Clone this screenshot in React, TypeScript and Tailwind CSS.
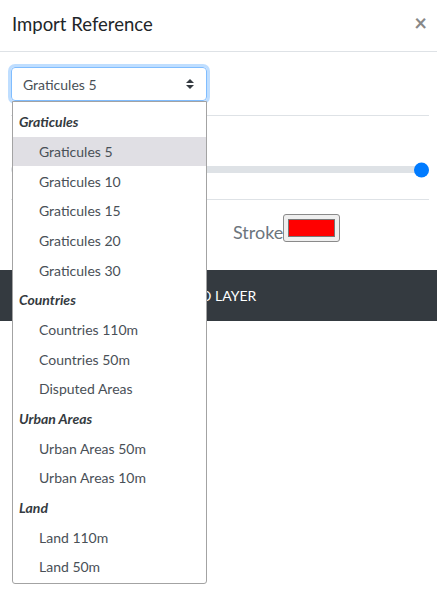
import React from "react";

const groups: { label: string; items: string[] }[] = [
  { label: "Graticules", items: ["Graticules 5", "Graticules 10", "Graticules 15", "Graticules 20", "Graticules 30"] },
  { label: "Countries", items: ["Countries 110m", "Countries 50m", "Disputed Areas"] },
  { label: "Urban Areas", items: ["Urban Areas 50m", "Urban Areas 10m"] },
  { label: "Land", items: ["Land 110m", "Land 50m"] },
];

export default function App() {
  return (
    <div
      className="relative w-[437px] h-[605px] bg-white text-[#212529] overflow-hidden"
      style={{ fontFamily: 'Lato, "Noto Sans", sans-serif' }}
    >
      {/* Header */}
      <div className="flex items-center justify-between h-[52px] pl-[12px] pr-[10px] border-b border-[#dee2e6]">
        <div className="text-[18.5px] leading-none text-[#212529] -mt-[3px]">Import Reference</div>
        <div className="text-[22px] font-bold leading-none text-[#888] -mt-[6px]">×</div>
      </div>

      {/* Body */}
      <div className="pl-[11px] pr-[8px] pt-[15px]">
        <div className="flex items-center justify-between w-[196px] h-[34px] border border-[#80bdff] rounded-[4px] shadow-[0_0_0_3px_rgba(0,123,255,0.25)] pl-[11px] pr-[12px]">
          <span className="text-[14px] text-[#495057]">Graticules 5</span>
          <svg width="8" height="10" viewBox="0 0 8 10">
            <path d="M4 0 L8 4 L0 4 Z" fill="#343a40" />
            <path d="M4 10 L8 6 L0 6 Z" fill="#343a40" />
          </svg>
        </div>
        <div className="mt-[14px] border-t border-[#dee2e6]" />
        <div className="h-[83px] flex items-center">
          <div className="relative w-full h-[7px] bg-[#dee2e6] rounded-full mt-[24px]">
            <div className="absolute right-0 top-1/2 -translate-y-1/2 w-[15px] h-[15px] rounded-full bg-[#007bff]" />
          </div>
        </div>
        <div className="border-t border-[#dee2e6]" />
        <div className="h-[70px] flex items-start pt-[14px] pl-[222px]">
          <span className="text-[18px] text-[#6c757d] leading-[28px] mt-[4px]">Stroke</span>
          <div className="w-[57px] h-[28px] rounded-[3px] border border-[#8a8a8a] bg-[#efefef] p-[4px]">
            <div className="w-full h-full bg-[#ff0000] border border-[#777]" />
          </div>
        </div>
      </div>
      <div className="h-[51px] bg-[#343a40] flex items-center justify-center">
        <span className="text-white text-[14px]">ADD LAYER</span>
      </div>

      {/* Dropdown */}
      <div className="absolute left-[12px] top-[101px] w-[195px] h-[483px] bg-white border border-[#a3a3a3] rounded-b-[3px] pt-[5px] text-[14px]">
        {groups.map((g) => (
          <React.Fragment key={g.label}>
            <div className="h-[29.67px] flex items-center pl-[6px] font-bold italic text-[#343a40]">{g.label}</div>
            {g.items.map((it) => (
              <div
                key={it}
                className={`h-[29.67px] flex items-center pl-[26px] text-[#495057] ${it === "Graticules 5" ? "bg-[#e0dfe4] text-[#212529]" : ""}`}
              >
                {it}
              </div>
            ))}
          </React.Fragment>
        ))}
      </div>
    </div>
  );
}
